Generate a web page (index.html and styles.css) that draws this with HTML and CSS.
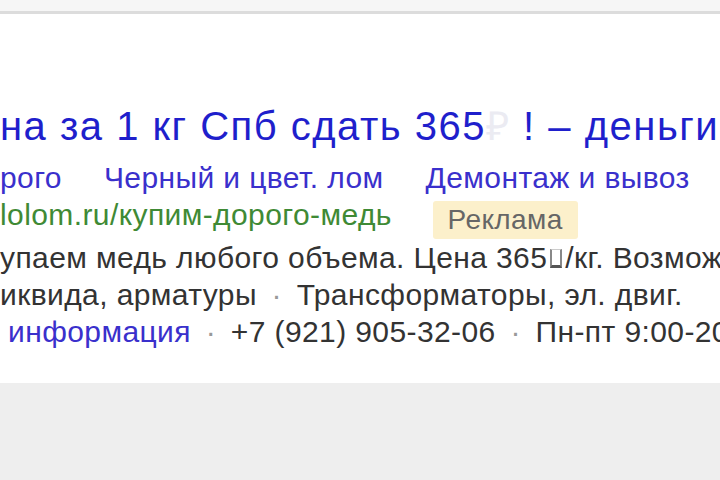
FILE: index.html
```html
<!DOCTYPE html>
<html>
<head>
    <title>Реклама</title>
    <link rel="stylesheet" href="styles.css">
</head>
<body>
    <div class="topbar"></div>
    <div class="ad">
        <h2 class="ad-title">на за 1 кг Спб сдать 365<span class="rub">₽</span> ! – деньги</h2>
        <div class="sitelinks">
            <a href="#">рого</a>
            <a href="#">Черный и цвет. лом</a>
            <a href="#">Демонтаж и вывоз</a>
        </div>
        <div class="ad-url">
            <span class="url">lolom.ru/купим-дорого-медь</span>
            <span class="label">Реклама</span>
        </div>
        <p class="ad-text">упаем медь любого объема. Цена 365<span class="tofu"></span>/кг. Возможен вывоз</p>
        <p class="ad-text">иквида, арматуры <span class="sep">·</span> Трансформаторы, эл. двиг.</p>
        <p class="ad-text contacts">
            <a href="#">информация</a>
            <span class="sep">·</span>
            <span>+7 (921) 905-32-06</span>
            <span class="sep">·</span>
            <span>Пн-пт 9:00-20:00</span>
        </p>
    </div>
    <div class="footer"></div>
</body>
</html>
```

FILE: styles.css
```css
html, body {
    height: 100%;
}
body {
    font-family: "Liberation Sans", Arial, sans-serif;
    margin: 0;
    padding: 0;
    background-color: #eeeeee;
    display: flex;
    flex-direction: column;
    overflow: hidden;
}
.topbar {
    height: 11px;
    background-color: #f6f6f6;
    border-bottom: 3px solid #dcdcdc;
}
.ad {
    background-color: #fff;
    height: 369px;
    white-space: nowrap;
    overflow: hidden;
    letter-spacing: 0.4px;
}
.ad-title {
    margin: 88px 0 0 0;
    font-size: 40px;
    line-height: 48px;
    font-weight: normal;
    letter-spacing: 1.5px;
    color: #1f1fcc;
}
.rub {
    color: #ebebf2;
}
.sitelinks {
    margin-top: 9px;
    display: flex;
    gap: 42px;
    font-size: 30px;
    line-height: 37px;
}
.sitelinks a, .contacts a {
    color: #3a30cc;
    text-decoration: none;
}
.ad-url {
    height: 37px;
    font-size: 30px;
    line-height: 37px;
}
.url {
    color: #3f8a35;
}
.label {
    display: inline-block;
    margin-left: 32px;
    padding: 0 15px;
    font-size: 28px;
    line-height: 38px;
    vertical-align: -4px;
    color: #666;
    background-color: #fcf0cb;
    border-radius: 3px;
}
.ad-text {
    margin: 0;
    font-size: 30px;
    line-height: 37px;
    color: #333;
}
.ad-url + .ad-text {
    margin-top: 6px;
}
.sep {
    color: #999;
    margin: 0 6px;
}
.contacts {
    padding-left: 8px;
}
.tofu {
    display: inline-block;
    width: 8px;
    height: 15px;
    margin: 0 3px;
    border: 2px solid #888;
    border-top: 1px solid #ccc;
    border-bottom: 3px solid #555;
}
.footer {
    flex: 1;
}
```
